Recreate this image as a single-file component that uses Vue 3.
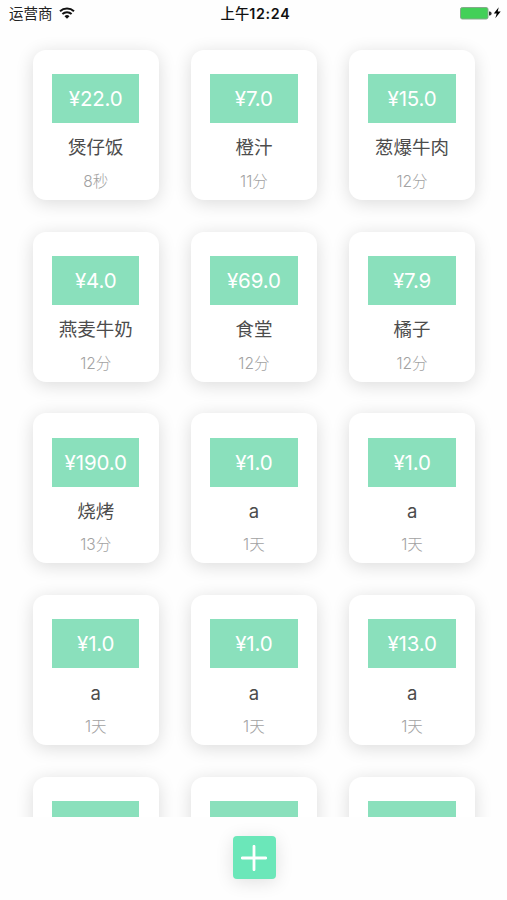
<template>
  <div class="screen">
    <header class="status-bar">
      <div class="carrier">
        <span>运营商</span>
        <svg class="wifi" viewBox="0 0 16 12" width="16" height="12">
          <path d="M1 4.3a10.4 10.4 0 0 1 14 0" />
          <path d="M3.4 6.9a6.9 6.9 0 0 1 9.2 0" />
          <path class="wifi-dot" d="M5.5 9.2a3.8 3.8 0 0 1 5 0L8 11.8z" />
        </svg>
      </div>
      <div class="clock">上午<span class="digits">12:24</span></div>
      <div class="power">
        <svg viewBox="0 0 42 14" width="42" height="14">
          <rect x="0.5" y="1.5" width="27.5" height="11.5" rx="1.8" fill="#43d058" stroke="#86a98b" />
          <path d="M29 5.4h.6a1.5 1.5 0 0 1 0 4H29z" fill="#333" />
          <path d="M38.7 1.3L33.8 7.5h2.9L35.3 12.3l5.4-6.7h-3z" fill="#000" />
        </svg>
      </div>
    </header>

    <main class="list">
      <div v-for="(item, index) in items" :key="index" class="card">
        <div class="price">{{ item.price }}</div>
        <div v-if="item.name" class="name">{{ item.name }}</div>
        <div v-if="item.time" class="time">{{ item.time }}</div>
      </div>
    </main>

    <footer class="footer">
      <button class="add-button">
        <svg viewBox="0 0 26 26" width="26" height="26">
          <path d="M13 1.3v23.4M1.3 13h23.4" />
        </svg>
      </button>
    </footer>
  </div>
</template>

<script setup>
import { ref } from 'vue'

const items = ref([
  { price: '¥22.0', name: '煲仔饭', time: '8秒' },
  { price: '¥7.0', name: '橙汁', time: '11分' },
  { price: '¥15.0', name: '葱爆牛肉', time: '12分' },
  { price: '¥4.0', name: '燕麦牛奶', time: '12分' },
  { price: '¥69.0', name: '食堂', time: '12分' },
  { price: '¥7.9', name: '橘子', time: '12分' },
  { price: '¥190.0', name: '烧烤', time: '13分' },
  { price: '¥1.0', name: 'a', time: '1天' },
  { price: '¥1.0', name: 'a', time: '1天' },
  { price: '¥1.0', name: 'a', time: '1天' },
  { price: '¥1.0', name: 'a', time: '1天' },
  { price: '¥13.0', name: 'a', time: '1天' },
  {},
  {},
  {}
])
</script>

<style>
body {
  margin: 0;
  background: #fefefe;
}
</style>

<style scoped>
.screen {
  display: flex;
  flex-direction: column;
  height: 900px;
  overflow: hidden;
  background: #fefefe;
  font-family: Inter, "Noto Sans CJK SC", sans-serif;
}

.status-bar {
  display: grid;
  grid-template-columns: 1fr auto 1fr;
  align-items: center;
  flex: none;
  height: 27px;
  padding: 0 5px 0 9px;
  box-sizing: border-box;
  font-size: 14.5px;
  line-height: 27px;
  color: #222;
}

.carrier {
  display: flex;
  align-items: center;
  gap: 6px;
}

.wifi {
  margin-top: -2px;
  fill: none;
  stroke: #111;
  stroke-width: 2;
}

.wifi-dot {
  fill: #111;
  stroke: none;
}

.clock {
  font-size: 14.3px;
  font-weight: 500;
  color: #111;
}

.digits {
  font-weight: 600;
  letter-spacing: 0.7px;
}

.power {
  display: flex;
  justify-content: flex-end;
  margin-top: -1px;
}

.list {
  display: grid;
  grid-template-columns: repeat(3, 126.4px);
  grid-auto-rows: 150px;
  gap: 31.8px;
  flex: none;
  height: 790px;
  padding: 22.8px 0 0 32.5px;
  box-sizing: border-box;
  overflow: hidden;
}

.card {
  display: flex;
  flex-direction: column;
  align-items: center;
  padding-top: 24.3px;
  box-sizing: border-box;
  border-radius: 13px;
  background: #fff;
  box-shadow: 0 3px 18px rgba(0, 0, 0, 0.14);
}

.price {
  width: 87.4px;
  height: 49px;
  background: #8ae0bc;
  color: #fff;
  font-size: 20.5px;
  line-height: 50px;
  letter-spacing: -0.15px;
  text-align: center;
}

.name {
  margin-top: 10.3px;
  font-size: 18.5px;
  line-height: 28px;
  color: #4c4c4c;
}

.time {
  margin-top: 8.4px;
  font-size: 15.5px;
  font-weight: 300;
  line-height: 24px;
  color: #a2a2a2;
}

.footer {
  display: flex;
  justify-content: center;
  flex: 1;
  padding: 19px 0 0 1.5px;
}

.add-button {
  display: flex;
  align-items: center;
  justify-content: center;
  width: 43px;
  height: 43px;
  padding: 0;
  border: 0;
  border-radius: 4px;
  background: #6be7b9;
  box-shadow: 0 3px 18px rgba(0, 0, 0, 0.12);
}

.add-button svg {
  fill: none;
  stroke: #fff;
  stroke-width: 2.8;
  stroke-linecap: round;
}
</style>
